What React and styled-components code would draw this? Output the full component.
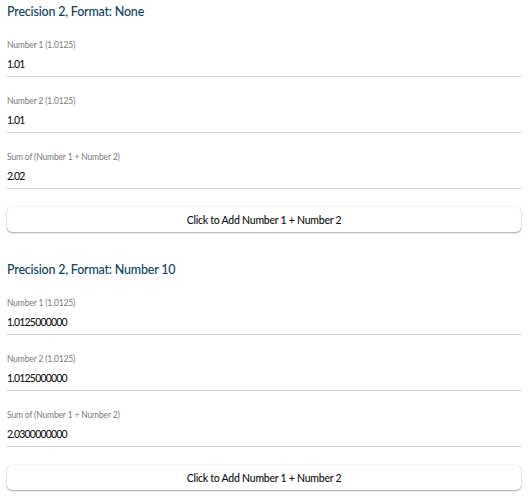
import React from 'react';
import styled, { createGlobalStyle } from 'styled-components';

const Global = createGlobalStyle`
    body {
        margin: 0;
        background: #ffffff;
        font-family: Lato, "Noto Sans", sans-serif;
    }
`;

const Page = styled.div`
    display: flex;
    flex-direction: column;
    padding: 2px 10px 0 7px;
`;

const Section = styled.section`
    display: flex;
    flex-direction: column;
    margin-bottom: 28px;
`;

const Title = styled.h2`
    color: #0d4560;
    font-size: 12.5px;
    font-weight: 500;
    letter-spacing: -0.2px;
    line-height: 20px;
    margin: 0 0 9px 0;
`;

const Field = styled.div`
    border-bottom: 1px solid #cfcfcf;
    display: flex;
    flex-direction: column;
    margin-bottom: ${props => (props.last ? '18px' : '10px')};
    padding: 8px 0 4px 0;
`;

const Label = styled.label`
    color: #7a7a7a;
    font-size: 8.5px;
    letter-spacing: -0.15px;
    line-height: 12px;
    margin-bottom: 5px;
`;

const Value = styled.div`
    color: #111;
    font-size: 10.5px;
    font-weight: 500;
    letter-spacing: -0.8px;
    line-height: 16px;
`;

const AddButton = styled.button`
    background: #fff;
    border: none;
    border-radius: 5px;
    box-shadow: 0 0 1px rgba(0,0,0,0.2), 0 1px 2px rgba(0,0,0,0.35);
    color: #111;
    cursor: pointer;
    font-family: inherit;
    font-size: 10.5px;
    font-weight: 500;
    height: 25px;
    letter-spacing: -0.25px;
    padding: 0;
`;

const sections = [
    { title: 'Precision 2, Format: None', n1: '1.01', n2: '1.01', sum: '2.02' },
    { title: 'Precision 2, Format: Number 10', n1: '1.0125000000', n2: '1.0125000000', sum: '2.0300000000' },
];

const App = () => {
    return (
        <Page>
            <Global />
            {sections.map(s => (
                <Section key={s.title}>
                    <Title>{s.title}</Title>
                    <Field>
                        <Label>Number 1 (1.0125)</Label>
                        <Value>{s.n1}</Value>
                    </Field>
                    <Field>
                        <Label>Number 2 (1.0125)</Label>
                        <Value>{s.n2}</Value>
                    </Field>
                    <Field last>
                        <Label>Sum of (Number 1 + Number 2)</Label>
                        <Value>{s.sum}</Value>
                    </Field>
                    <AddButton>Click to Add Number 1 + Number 2</AddButton>
                </Section>
            ))}
        </Page>
    );
};

export default App;
